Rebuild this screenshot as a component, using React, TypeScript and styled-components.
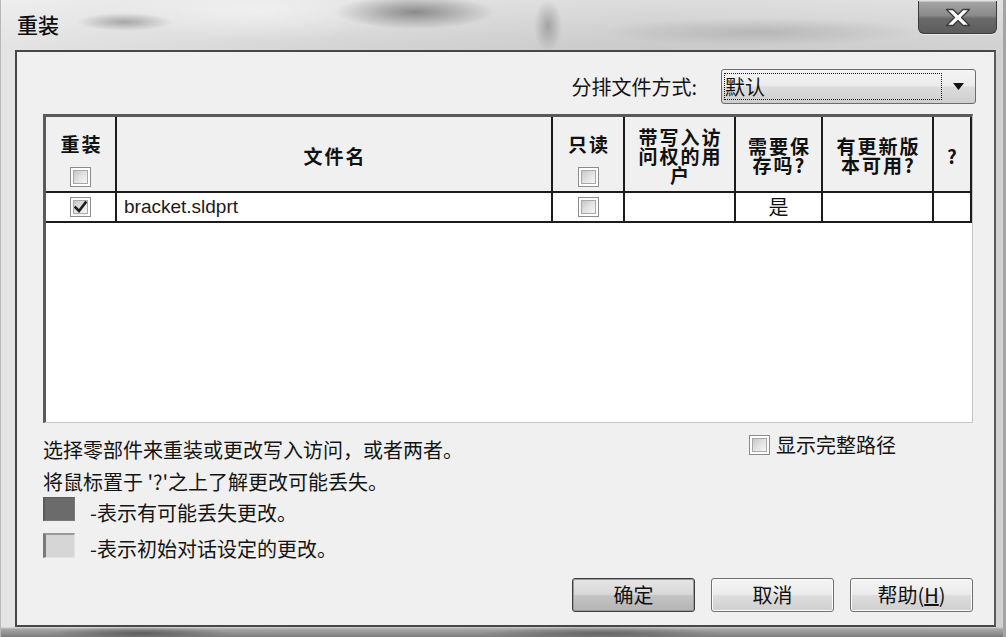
import React from "react";
import styled, { createGlobalStyle } from "styled-components";

const CJK = `"Noto Sans CJK SC", "Liberation Sans", sans-serif`;

const GlobalStyle = createGlobalStyle`
  html, body {
    margin: 0;
    padding: 0;
    width: 1006px;
    height: 637px;
    overflow: hidden;
    background: #d4d4d4;
  }
  body {
    font-family: ${CJK};
    color: #141414;
  }
  * { box-sizing: border-box; }
`;

const Window = styled.div`
  width: 1006px;
  height: 637px;
  display: flex;
  flex-direction: column;
  padding: 0 10px 10px 15px;
  box-shadow: inset -3px 0 0 #a4a4a4, inset 1px 0 0 #b8b8b8;
  background:
    radial-gradient(ellipse 48px 9px at 125px 22px, rgba(105, 105, 105, 0.5), rgba(105, 105, 105, 0) 100%),
    radial-gradient(ellipse 80px 17px at 415px 12px, rgba(70, 70, 70, 0.55), rgba(70, 70, 70, 0) 100%),
    radial-gradient(ellipse 14px 26px at 548px 26px, rgba(90, 90, 90, 0.4), rgba(90, 90, 90, 0) 100%),
    radial-gradient(ellipse 160px 14px at 760px 32px, rgba(120, 120, 120, 0.3), rgba(120, 120, 120, 0) 100%),
    radial-gradient(ellipse 150px 30px at 260px 12px, rgba(255, 255, 255, 0.45), rgba(255, 255, 255, 0) 100%),
    radial-gradient(ellipse 90px 6px at 140px 633px, rgba(60, 60, 60, 0.6), rgba(60, 60, 60, 0) 100%),
    radial-gradient(ellipse 120px 6px at 600px 633px, rgba(60, 60, 60, 0.5), rgba(60, 60, 60, 0) 100%),
    linear-gradient(180deg, rgba(0, 0, 0, 0) 0, rgba(0, 0, 0, 0) 627px, #a8a8a8 629px, #7c7c7c 637px),
    linear-gradient(180deg, rgba(255, 255, 255, 0.35) 0, rgba(255, 255, 255, 0) 46px),
    linear-gradient(90deg, #e4e4e4 0, #d4d4d4 35%, #cacaca 65%, #d2d2d2 100%);
`;

const TitleBar = styled.div`
  height: 50px;
  display: flex;
  align-items: flex-start;
  justify-content: space-between;
`;

const Title = styled.div`
  font: 500 21px/21px ${CJK};
  color: #0e0e0e;
  padding: 14px 0 0 2px;
`;

const CloseButton = styled.div`
  width: 79px;
  height: 33px;
  margin: 1px -1px 0 0;
  border: 1px solid #3c3c3c;
  border-top: none;
  border-radius: 0 0 6px 6px;
  display: flex;
  align-items: center;
  justify-content: center;
  background: linear-gradient(180deg, #a6a6a6 0, #8a8a8a 45%, #6a6a6a 55%, #5c5c5c 100%);
  box-shadow: inset 0 1px 0 rgba(255, 255, 255, 0.35), 0 1px 0 rgba(255, 255, 255, 0.5);
`;

const Client = styled.div`
  flex: 1;
  display: flex;
  flex-direction: column;
  border: 2px solid #474747;
  border-right-color: #5a5a5a;
  background: #f0f0f0;
  padding: 17px 18px 13px 26px;
`;

const SortRow = styled.div`
  height: 35px;
  display: flex;
  align-items: center;
  justify-content: flex-end;
  gap: 24px;
`;

const Label = styled.span`
  font: 400 20px/24px ${CJK};
  color: #141414;
`;

const Combo = styled.div`
  width: 255px;
  height: 35px;
  display: flex;
  border: 1px solid #6c6c6c;
  border-radius: 3px;
  background: linear-gradient(180deg, #f4f4f4 0, #ebebeb 48%, #dcdcdc 52%, #cfcfcf 100%);
`;

const ComboFocus = styled.div`
  flex: 1;
  margin: 3px 0 3px 2px;
  border: 1px dotted #1a1a1a;
  display: flex;
  align-items: center;
  font: 400 20px/20px ${CJK};
  color: #101010;
`;

const ComboArrow = styled.div`
  width: 33px;
  display: flex;
  align-items: center;
  justify-content: center;
`;

const TableBox = styled.div`
  height: 309px;
  margin: 10px 3px 0 0;
  border-top: 3px solid #5a5a5a;
  border-left: 3px solid #5a5a5a;
  border-right: 1px solid #c6c6c6;
  border-bottom: 1px solid #c6c6c6;
  background: #ffffff;
`;

const Grid = styled.div`
  display: grid;
  grid-template-columns: 71px 436px 72px 111px 87px 111px 38px;
  grid-template-rows: 76px 30px;
`;

const HeadCell = styled.div<{ $withBox?: boolean }>`
  background: #f0f0f0;
  border-right: 2px solid #1c1c1c;
  border-bottom: 2px solid #1c1c1c;
  display: flex;
  flex-direction: column;
  align-items: center;
  justify-content: ${(p) => (p.$withBox ? "flex-start" : "center")};
  padding-top: ${(p) => (p.$withBox ? "17px" : "2px")};
  gap: ${(p) => (p.$withBox ? "14px" : "0")};
  text-align: center;
  font: 700 19px/19px ${CJK};
  letter-spacing: 2px;
  color: #111;
`;

const HeadLine = styled.span`
  display: block;
  height: 19px;
  white-space: nowrap;
  margin-right: -2px;
`;

const BodyCell = styled.div<{ $align?: string }>`
  border-right: 2px solid #1c1c1c;
  border-bottom: 2px solid #1c1c1c;
  display: flex;
  align-items: center;
  justify-content: ${(p) => p.$align || "center"};
  padding-left: ${(p) => (p.$align === "flex-start" ? "7px" : "0")};
`;

const FileName = styled.span`
  font: 400 19px/22px "Liberation Sans", "DejaVu Sans", sans-serif;
  color: #1a1a1a;
`;

const CellText = styled.span`
  font: 400 20px/22px ${CJK};
  color: #111;
`;

const Box = styled.span`
  width: 21px;
  height: 20px;
  display: inline-flex;
  align-items: center;
  justify-content: center;
  border: 1px solid #8c8c8c;
  background: #fdfdfd;
  padding: 2px;
  flex: none;
`;

const BoxInner = styled.span`
  width: 100%;
  height: 100%;
  display: flex;
  align-items: center;
  justify-content: center;
  border: 1px solid #a8a8a8;
  background: linear-gradient(135deg, #c6c6c6 0, #e2e2e2 50%, #f6f6f6 100%);
`;

const InfoRow = styled.div`
  display: flex;
  justify-content: space-between;
  align-items: flex-start;
  margin-top: 11px;
`;

const InfoText = styled.div`
  font: 400 20px/32px ${CJK};
  color: #141414;
  white-space: nowrap;
`;

const FullPath = styled.label`
  display: flex;
  align-items: center;
  gap: 6px;
  margin: 1px 80px 0 0;
  font: 400 20px/20px ${CJK};
  color: #141414;
`;

const LegendRow = styled.div<{ $first?: boolean }>`
  display: flex;
  align-items: flex-start;
  gap: 15px;
  margin-top: ${(p) => (p.$first ? "-1px" : "8px")};
`;

const Swatch = styled.span<{ $dark?: boolean }>`
  width: 32px;
  height: ${(p) => (p.$dark ? "24px" : "25px")};
  flex: none;
  background: ${(p) => (p.$dark ? "#6b6b6b" : "#d6d6d6")};
  border-left: ${(p) => (p.$dark ? "2px solid #5a5a5a" : "3px solid #7a7a7a")};
  border-top: ${(p) => (p.$dark ? "1px solid #5e5e5e" : "2px solid #9a9a9a")};
  border-right: 1px solid ${(p) => (p.$dark ? "#7a7a7a" : "#e2e2e2")};
  border-bottom: 1px solid ${(p) => (p.$dark ? "#7a7a7a" : "#e2e2e2")};
`;

const LegendText = styled.span`
  font: 400 20px/24px ${CJK};
  padding-top: 4px;
  color: #141414;
`;

const ButtonRow = styled.div`
  margin: auto 3px 0 0;
  display: flex;
  justify-content: flex-end;
  gap: 16px;
`;

const Button = styled.button<{ $default?: boolean }>`
  width: 123px;
  height: 34px;
  border: 1px solid ${(p) => (p.$default ? "#3e3e3e" : "#707070")};
  border-radius: 3px;
  background: ${(p) =>
    p.$default
      ? "linear-gradient(180deg, #e6e6e6 0, #d8d8d8 48%, #c4c4c4 52%, #b4b4b4 100%)"
      : "linear-gradient(180deg, #f4f4f4 0, #ebebeb 48%, #dddddd 52%, #cfcfcf 100%)"};
  box-shadow: ${(p) =>
    p.$default ? "inset 0 0 0 1px #9a9a9a" : "inset 0 0 0 1px #fbfbfb"};
  font: 400 20px/20px ${CJK};
  color: #111;
  padding: 0;
  cursor: default;
`;

const Check = () => (
  <svg width="13" height="12" viewBox="0 0 13 12">
    <path d="M1.5 6.5 L5 10 L11.5 1.5" fill="none" stroke="#1e1e1e" strokeWidth="2.6" strokeLinecap="square" />
  </svg>
);

const CheckBox = ({ checked }: { checked?: boolean }) => (
  <Box>
    <BoxInner>{checked ? <Check /> : null}</BoxInner>
  </Box>
);

const CloseGlyph = () => (
  <svg width="26" height="19" viewBox="0 0 26 19">
    <polygon
      points="1.5,1.5 8,1.5 13,6.5 18,1.5 24.5,1.5 16.5,9.5 24.5,17.5 18,17.5 13,12.5 8,17.5 1.5,17.5 9.5,9.5"
      fill="#ffffff"
      stroke="#3a3a3a"
      strokeWidth="1.3"
      strokeLinejoin="round"
    />
  </svg>
);

const ArrowGlyph = () => (
  <svg width="11" height="7" viewBox="0 0 11 7">
    <polygon points="0,0 11,0 5.5,7" fill="#111" />
  </svg>
);

const headers: { lines: string[]; box?: boolean }[] = [
  { lines: ["重装"], box: true },
  { lines: ["文件名"] },
  { lines: ["只读"], box: true },
  { lines: ["带写入访", "问权的用", "户"] },
  { lines: ["需要保", "存吗?"] },
  { lines: ["有更新版", "本可用?"] },
  { lines: ["?"] },
];

export default function App() {
  return (
    <>
      <GlobalStyle />
      <Window>
        <TitleBar>
          <Title>重装</Title>
          <CloseButton>
            <CloseGlyph />
          </CloseButton>
        </TitleBar>
        <Client>
          <SortRow>
            <Label>分排文件方式:</Label>
            <Combo>
              <ComboFocus>默认</ComboFocus>
              <ComboArrow>
                <ArrowGlyph />
              </ComboArrow>
            </Combo>
          </SortRow>

          <TableBox>
            <Grid>
              {headers.map((h, i) => (
                <HeadCell key={i} $withBox={h.box}>
                  {h.lines.map((l) => (
                    <HeadLine key={l}>{l}</HeadLine>
                  ))}
                  {h.box ? <CheckBox /> : null}
                </HeadCell>
              ))}

              <BodyCell>
                <CheckBox checked />
              </BodyCell>
              <BodyCell $align="flex-start">
                <FileName>bracket.sldprt</FileName>
              </BodyCell>
              <BodyCell>
                <CheckBox />
              </BodyCell>
              <BodyCell />
              <BodyCell>
                <CellText>是</CellText>
              </BodyCell>
              <BodyCell />
              <BodyCell />
            </Grid>
          </TableBox>

          <InfoRow>
            <InfoText>选择零部件来重装或更改写入访问，或者两者。</InfoText>
            <FullPath>
              <CheckBox />
              显示完整路径
            </FullPath>
          </InfoRow>
          <InfoText>将鼠标置于 '?'之上了解更改可能丢失。</InfoText>

          <LegendRow $first>
            <Swatch $dark />
            <LegendText>-表示有可能丢失更改。</LegendText>
          </LegendRow>
          <LegendRow>
            <Swatch />
            <LegendText>-表示初始对话设定的更改。</LegendText>
          </LegendRow>

          <ButtonRow>
            <Button $default>确定</Button>
            <Button>取消</Button>
            <Button>
              帮助(<u>H</u>)
            </Button>
          </ButtonRow>
        </Client>
      </Window>
    </>
  );
}
